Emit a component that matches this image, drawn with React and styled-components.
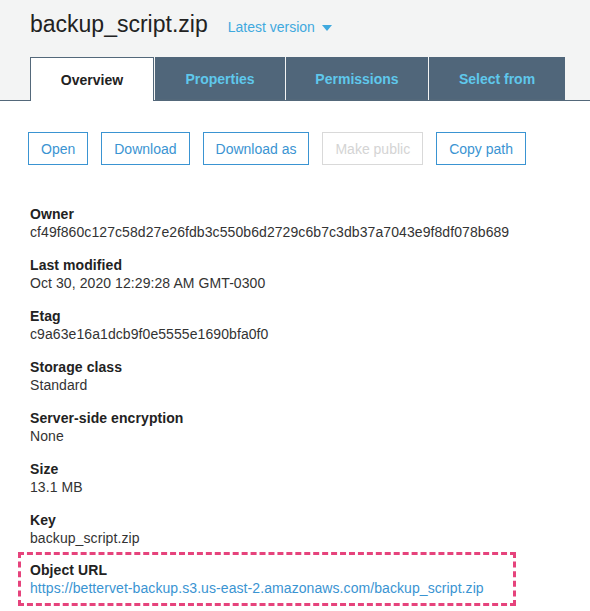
import React from "react"
import styled, { createGlobalStyle } from "styled-components"

const GlobalStyle = createGlobalStyle`
  html, body {
    margin: 0;
    padding: 0;
    background: #fff;
    font-family: "Liberation Sans", Arial, sans-serif;
    color: #333;
  }
`

const Header = styled.div`
  background: #f3f4f4;
  border-bottom: 1px solid #53687a;
  padding: 11px 0 0 30px;
`

const TitleRow = styled.div`
  display: flex;
  align-items: baseline;
  gap: 20px;
  height: 46px;
`

const Title = styled.h1`
  margin: 0;
  font-size: 23px;
  font-weight: normal;
  color: #222;
`

const Version = styled.span`
  display: inline-flex;
  align-items: center;
  gap: 7px;
  font-size: 14px;
  color: #3fa9de;
`

const Caret = styled.span`
  width: 0;
  height: 0;
  border-left: 5px solid transparent;
  border-right: 5px solid transparent;
  border-top: 6px solid #3fa9de;
  margin-top: 2px;
`

const Tabs = styled.div`
  display: flex;
  margin-bottom: -1px;
`

const Tab = styled.div`
  height: 43px;
  display: flex;
  align-items: center;
  justify-content: center;
  box-sizing: border-box;
  width: ${p => p.$w}px;
  font-size: 14px;
  font-weight: bold;
  background: ${p => (p.$active ? "#fff" : "#50667a")};
  color: ${p => (p.$active ? "#222" : "#5fc8ec")};
  border: 1px solid ${p => (p.$active ? "#53687a" : "#50667a")};
  border-bottom: ${p => (p.$active ? "none" : "1px solid #53687a")};
  margin-right: 1px;
  ${p => (p.$active ? "height: 44px;" : "")}
`

const Body = styled.div`
  padding: 31px 30px 0 28px;
`

const Buttons = styled.div`
  display: flex;
  gap: 13px;
  margin-bottom: 40px;
`

const Button = styled.button`
  height: 33px;
  padding: 0 12px;
  background: #fff;
  font-family: inherit;
  font-size: 14px;
  color: ${p => (p.disabled ? "#d4d4d4" : "#3a94d2")};
  border: 1px solid ${p => (p.disabled ? "#d9d9d9" : "#3a94d2")};
  border-radius: 0;
`

const Fields = styled.div`
  display: flex;
  flex-direction: column;
  gap: 15px;
  padding-left: 2px;
`

const Field = styled.div`
  display: flex;
  flex-direction: column;
  font-size: 14px;
  line-height: 18px;
  letter-spacing: 0.08px;
`

const Label = styled.div`
  font-weight: bold;
  color: #222;
`

const Value = styled.div`
  color: #333;
`

const Link = styled.a`
  color: #3a94d2;
  text-decoration: none;
`

const Highlight = styled.div`
  margin: -10px 0 0 -12px;
  width: 498px;
  box-sizing: border-box;
  border: 3px dashed #e6437c;
  padding: 6px 9px 6px;
`

const fields = [
  ["Owner", "cf49f860c127c58d27e26fdb3c550b6d2729c6b7c3db37a7043e9f8df078b689"],
  ["Last modified", "Oct 30, 2020 12:29:28 AM GMT-0300"],
  ["Etag", "c9a63e16a1dcb9f0e5555e1690bfa0f0"],
  ["Storage class", "Standard"],
  ["Server-side encryption", "None"],
  ["Size", "13.1 MB"],
  ["Key", "backup_script.zip"],
]

export default function App() {
  return (
    <>
      <GlobalStyle />
      <Header>
        <TitleRow>
          <Title>backup_script.zip</Title>
          <Version>
            Latest version <Caret />
          </Version>
        </TitleRow>
        <Tabs>
          <Tab $active $w={124}>Overview</Tab>
          <Tab $w={130}>Properties</Tab>
          <Tab $w={142}>Permissions</Tab>
          <Tab $w={136}>Select from</Tab>
        </Tabs>
      </Header>
      <Body>
        <Buttons>
          <Button>Open</Button>
          <Button>Download</Button>
          <Button>Download as</Button>
          <Button disabled>Make public</Button>
          <Button>Copy path</Button>
        </Buttons>
        <Fields>
          {fields.map(([label, value]) => (
            <Field key={label}>
              <Label>{label}</Label>
              <Value>{value}</Value>
            </Field>
          ))}
          <Highlight>
            <Field>
              <Label>Object URL</Label>
              <Link href="#">https://bettervet-backup.s3.us-east-2.amazonaws.com/backup_script.zip</Link>
            </Field>
          </Highlight>
        </Fields>
      </Body>
    </>
  )
}
